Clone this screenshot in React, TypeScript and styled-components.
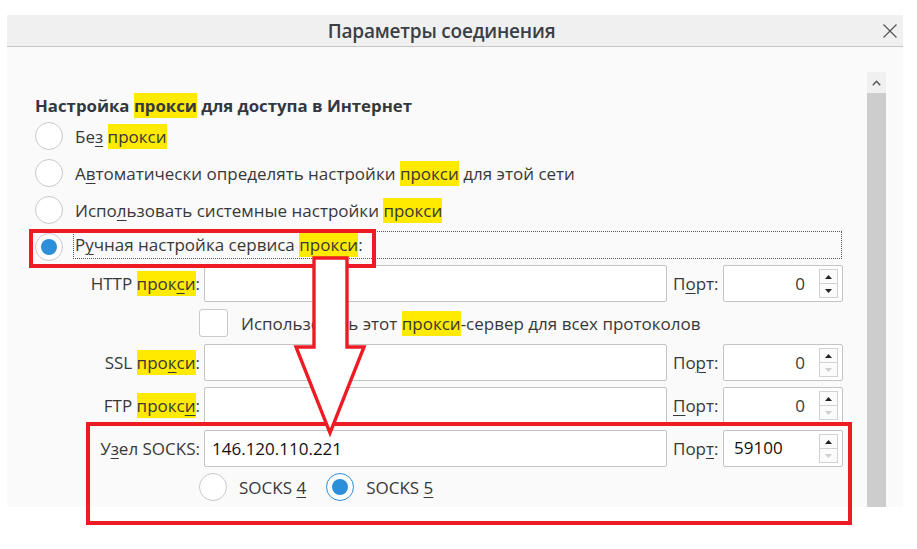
import React from "react";
import styled, { createGlobalStyle } from "styled-components";

const Global = createGlobalStyle`
  html, body { margin: 0; padding: 0; background: #ffffff; }
  body { font-family: "Open Sans", "Noto Sans", sans-serif; color: #383838; }
  * { box-sizing: border-box; }
`;

const Root = styled.div`
  position: relative;
  width: 917px;
  height: 549px;
  padding: 15px 0 0 7px;
  overflow: hidden;
`;

const Dialog = styled.div`
  width: 896px;
  display: flex;
  flex-direction: column;
`;

const TitleBar = styled.div`
  height: 32px;
  background: #f0f0f0;
  border-bottom: 1px solid #c6c6c6;
  display: flex;
  align-items: center;
`;

const Title = styled.div`
  flex: 1;
  text-align: center;
  font-size: 19px;
  font-weight: 600;
  color: #3a3f45;
  letter-spacing: -0.2px;
`;

const Close = styled.div`
  width: 27px;
  height: 31px;
  display: flex;
  align-items: center;
  justify-content: flex-start;
  padding-left: 7px;
`;

const Content = styled.div`
  height: 460px;
  background: #fafafa;
  display: flex;
`;

const Main = styled.div`
  flex: 1;
  padding: 48px 0 0 28px;
  overflow: hidden;
  display: flex;
  flex-direction: column;
`;

const ScrollCol = styled.div`
  width: 19px;
  margin-right: 17px;
  padding-top: 25px;
  display: flex;
  flex-direction: column;
`;

const ScrollArrow = styled.div`
  height: 21px;
  background: #f0f0f0;
  display: flex;
  align-items: center;
  justify-content: center;
`;

const Thumb = styled.div`
  flex: 1;
  background: #cdcdcd;
`;

const Heading = styled.div`
  font-size: 16.8px;
  font-weight: 700;
  line-height: 22px;
  height: 23px;
  color: #333840;
`;

const Mark = styled.span`
  background: #ffea00;
  padding: 1px 0;
`;

const Key = styled.u`
  text-decoration-thickness: 1px;
  text-underline-offset: 3px;
`;

const RadioRow = styled.div`
  height: 37px;
  display: flex;
  align-items: center;
  gap: 12px;
  font-size: 17px;
`;

const Radio = styled.div<{ $checked?: boolean; $focus?: boolean }>`
  width: 28px;
  height: 28px;
  flex: none;
  border-radius: 50%;
  background: #ffffff;
  border: ${(p) => (p.$focus ? "1.5px solid #2b90d9" : "1px solid #c9c9c9")};
  display: flex;
  align-items: center;
  justify-content: center;
  &::after {
    content: "";
    display: ${(p) => (p.$checked ? "block" : "none")};
    width: 16px;
    height: 16px;
    border-radius: 50%;
    background: #2b90d9;
  }
`;

const FocusLabel = styled.div`
  width: 769px;
  height: 28px;
  margin: 0 0 4px -2px;
  padding-left: 1px;
  border: 1px dotted #555;
  display: flex;
  align-items: center;
`;

const FieldRow = styled.div<{ $gap?: number }>`
  display: grid;
  grid-template-columns: 169px 463px 56px 120px;
  height: 37px;
  margin-top: ${(p) => p.$gap ?? 0}px;
  font-size: 17px;
`;

const FieldLabel = styled.div`
  text-align: right;
  padding-right: 4px;
  align-self: center;
  white-space: nowrap;
`;

const PortLabel = styled.div`
  padding-left: 6px;
  align-self: center;
  white-space: nowrap;
`;

const TextBox = styled.div`
  background: #ffffff;
  border: 1px solid #c4c4c4;
  border-radius: 2px;
  display: flex;
  align-items: center;
  padding-left: 7px;
  font-size: 17px;
  color: #111;
`;

const PortBox = styled.div`
  background: #ffffff;
  border: 1px solid #c4c4c4;
  border-radius: 2px;
  display: flex;
  align-items: center;
  padding: 3px 4px 3px 0;
  font-size: 17px;
`;

const PortValue = styled.div<{ $left?: boolean }>`
  flex: 1;
  text-align: ${(p) => (p.$left ? "left" : "right")};
  padding: ${(p) => (p.$left ? "0 0 2px 10px" : "0 14px 0 0")};
  color: ${(p) => (p.$left ? "#111" : "#3a3a3a")};
`;

const Spinner = styled.div`
  width: 19px;
  height: 29px;
  display: flex;
  flex-direction: column;
`;

const SpinBtn = styled.div<{ $disabled?: boolean }>`
  flex: 1;
  border: 1px solid #d2d2d2;
  background: #fbfbfb;
  display: flex;
  align-items: center;
  justify-content: center;
  & + & { border-top: none; }
  svg path { fill: ${(p) => (p.$disabled ? "#cfcfcf" : "#222")}; }
`;

const CheckRow = styled.div`
  height: 42px;
  display: flex;
  align-items: center;
  padding-left: 164px;
  gap: 13px;
  font-size: 17px;
`;

const CheckBox = styled.div`
  width: 29px;
  height: 28px;
  border: 1px solid #c9c9c9;
  border-radius: 3px;
  background: #ffffff;
`;

const SocksRow = styled.div`
  height: 40px;
  display: flex;
  align-items: center;
  padding-left: 164px;
  font-size: 17px;
`;

const SocksOption = styled.div`
  display: flex;
  align-items: center;
  gap: 12px;
  margin-right: 20px;
`;

const Overlay = styled.svg`
  position: absolute;
  left: 0;
  top: 0;
  pointer-events: none;
`;

const Up = () => (
  <svg width="7" height="4" viewBox="0 0 7 4">
    <path d="M3.5 0 L7 4 L0 4 Z" />
  </svg>
);
const Down = () => (
  <svg width="7" height="4" viewBox="0 0 7 4">
    <path d="M0 0 L7 0 L3.5 4 Z" />
  </svg>
);

const Port = ({ value, left, downDisabled }: { value: string; left?: boolean; downDisabled?: boolean }) => (
  <PortBox>
    <PortValue $left={left}>{value}</PortValue>
    <Spinner>
      <SpinBtn>
        <Up />
      </SpinBtn>
      <SpinBtn $disabled={downDisabled}>
        <Down />
      </SpinBtn>
    </Spinner>
  </PortBox>
);

export default function App() {
  return (
    <>
      <Global />
      <Root>
        <Dialog>
          <TitleBar>
            <Title>Параметры соединения</Title>
            <Close>
              <svg width="14" height="14" viewBox="0 0 14 14">
                <path d="M0.5 0.5 L13.5 13.5 M13.5 0.5 L0.5 13.5" stroke="#555" strokeWidth="1.2" fill="none" />
              </svg>
            </Close>
          </TitleBar>
          <Content>
            <Main>
              <Heading>
                Настройка <Mark>прокси</Mark> для доступа в Интернет
              </Heading>
              <RadioRow>
                <Radio />
                <span>
                  Бе<Key>з</Key> <Mark>прокси</Mark>
                </span>
              </RadioRow>
              <RadioRow>
                <Radio />
                <span>
                  А<Key>в</Key>томатически определять настройки <Mark>прокси</Mark> для этой сети
                </span>
              </RadioRow>
              <RadioRow>
                <Radio />
                <span>
                  Испо<Key>л</Key>ьзовать системные настройки <Mark>прокси</Mark>
                </span>
              </RadioRow>
              <RadioRow>
                <Radio $checked />
                <FocusLabel>
                  <span>
                    Р<Key>у</Key>чная настройка сервиса <Mark>прокси</Mark>:
                  </span>
                </FocusLabel>
              </RadioRow>
              <FieldRow>
                <FieldLabel>
                  HTTP <Mark>прок<Key>с</Key>и</Mark>:
                </FieldLabel>
                <TextBox />
                <PortLabel>
                  П<Key>о</Key>рт:
                </PortLabel>
                <Port value="0" />
              </FieldRow>
              <CheckRow>
                <CheckBox />
                <span>
                  Использовать этот <Mark>прокси</Mark>-сервер для всех протоколов
                </span>
              </CheckRow>
              <FieldRow>
                <FieldLabel>
                  SSL <Mark>про<Key>к</Key>си</Mark>:
                </FieldLabel>
                <TextBox />
                <PortLabel>
                  По<Key>р</Key>т:
                </PortLabel>
                <Port value="0" downDisabled />
              </FieldRow>
              <FieldRow $gap={6}>
                <FieldLabel>
                  FTP <Mark>прокс<Key>и</Key></Mark>:
                </FieldLabel>
                <TextBox />
                <PortLabel>
                  <Key>П</Key>орт:
                </PortLabel>
                <Port value="0" downDisabled />
              </FieldRow>
              <FieldRow $gap={6}>
                <FieldLabel>
                  У<Key>з</Key>ел SOCKS:
                </FieldLabel>
                <TextBox>146.120.110.221</TextBox>
                <PortLabel>
                  Пор<Key>т</Key>:
                </PortLabel>
                <Port value="59100" left downDisabled />
              </FieldRow>
              <SocksRow>
                <SocksOption>
                  <Radio />
                  <span>
                    SOCKS <Key>4</Key>
                  </span>
                </SocksOption>
                <SocksOption>
                  <Radio $checked $focus />
                  <span>
                    SOCKS <Key>5</Key>
                  </span>
                </SocksOption>
              </SocksRow>
            </Main>
            <ScrollCol>
              <ScrollArrow>
                <svg width="9" height="6" viewBox="0 0 9 6">
                  <path d="M0.8 5.2 L4.5 1.2 L8.2 5.2" stroke="#555" strokeWidth="1.4" fill="none" />
                </svg>
              </ScrollArrow>
              <Thumb />
            </ScrollCol>
          </Content>
        </Dialog>
        <Overlay width="917" height="549" viewBox="0 0 917 549">
          <rect x="31" y="231" width="343" height="35" fill="none" stroke="#ed1c24" strokeWidth="4" />
          <rect x="88" y="424" width="762" height="99" fill="none" stroke="#ed1c24" strokeWidth="4" />
          <polygon
            points="314,258 347,258 347,347 364,347 330,433 296,347 314,347"
            fill="#ffffff"
            stroke="#ed1c24"
            strokeWidth="3.4"
            strokeLinejoin="miter"
          />
        </Overlay>
      </Root>
    </>
  );
}
